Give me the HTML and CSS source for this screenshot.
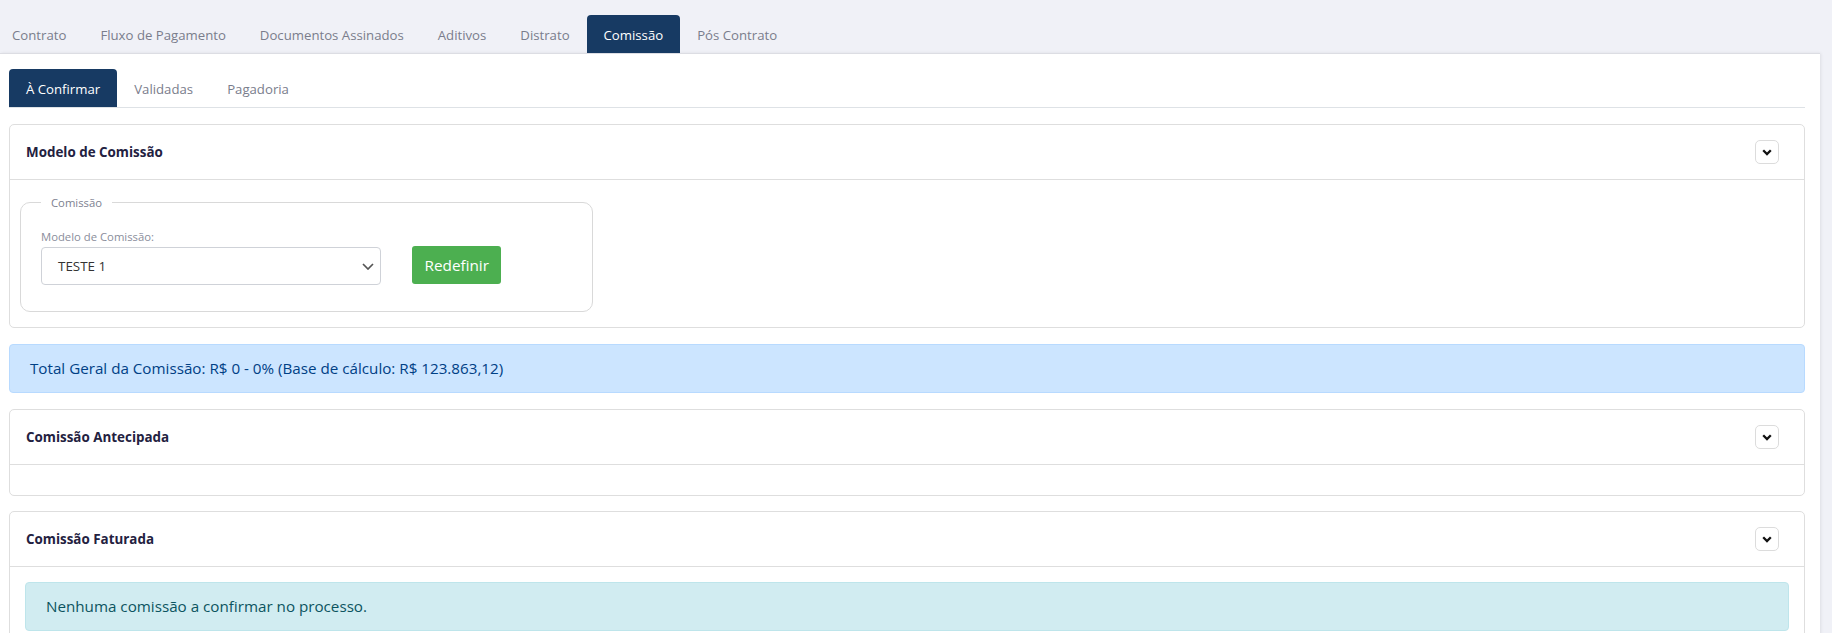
FILE: index.html
```html
<!DOCTYPE html>
<html lang="pt-BR">
<head>
    <meta charset="UTF-8">
    <meta name="viewport" content="width=device-width, initial-scale=1.0">
    <title>Comissão</title>
    <link rel="stylesheet" href="styles.css">
</head>
<body>
    <ul class="main-tabs">
        <li>Contrato</li>
        <li>Fluxo de Pagamento</li>
        <li>Documentos Assinados</li>
        <li>Aditivos</li>
        <li>Distrato</li>
        <li class="active">Comissão</li>
        <li>Pós Contrato</li>
    </ul>

    <div class="panel">
        <ul class="sub-tabs">
            <li class="active">À Confirmar</li>
            <li>Validadas</li>
            <li>Pagadoria</li>
        </ul>

        <div class="card">
            <div class="card-header">
                <span class="card-title">Modelo de Comissão</span>
                <button class="collapse-btn">
                    <svg width="10" height="7" viewBox="0 0 10 7"><path d="M1.2 1.3 L5 5.1 L8.8 1.3" /></svg>
                </button>
            </div>
            <div class="card-body model-body">
                <fieldset class="box">
                    <legend>Comissão</legend>
                    <label for="modelo">Modelo de Comissão:</label>
                    <div class="row">
                        <div class="select">
                            <span id="modelo">TESTE 1</span>
                            <svg width="12" height="7" viewBox="0 0 12 7"><path d="M1 1 L6 6 L11 1" /></svg>
                        </div>
                        <button class="btn-green">Redefinir</button>
                    </div>
                </fieldset>
            </div>
        </div>

        <div class="alert alert-primary">Total Geral da Comissão: R$ 0 - 0% (Base de cálculo: R$ 123.863,12)</div>

        <div class="card">
            <div class="card-header">
                <span class="card-title">Comissão Antecipada</span>
                <button class="collapse-btn">
                    <svg width="10" height="7" viewBox="0 0 10 7"><path d="M1.2 1.3 L5 5.1 L8.8 1.3" /></svg>
                </button>
            </div>
            <div class="card-body"></div>
        </div>

        <div class="card">
            <div class="card-header">
                <span class="card-title">Comissão Faturada</span>
                <button class="collapse-btn">
                    <svg width="10" height="7" viewBox="0 0 10 7"><path d="M1.2 1.3 L5 5.1 L8.8 1.3" /></svg>
                </button>
            </div>
            <div class="card-body">
                <div class="alert alert-info">Nenhuma comissão a confirmar no processo.</div>
            </div>
        </div>
    </div>
</body>
</html>
```

FILE: styles.css
```css
body {
    margin: 0;
    font-family: 'Open Sans', 'Noto Sans', sans-serif;
    background-color: #f0f1f7;
    color: #333;
    overflow: hidden;
}
ul {
    list-style: none;
    margin: 0;
    padding: 0;
}

/* abas principais */
.main-tabs {
    display: flex;
    padding-top: 15px;
    padding-left: 0;
    margin-left: -5px;
}
.main-tabs li {
    padding: 3px 17px 0;
    height: 35px;
    line-height: 35px;
    font-size: 13.2px;
    color: #7a7d8c;
    border-radius: 4px 4px 0 0;
}
.main-tabs li.active {
    background-color: #173a63;
    color: #fff;
}

.panel {
    background-color: #fff;
    border-top: 1px solid #dcdde3;
    margin-right: 12px;
    padding: 15px 15px 20px 9px;
    box-shadow: 1px 0 3px rgba(0, 0, 0, 0.08);
}

/* abas internas */
.sub-tabs {
    display: flex;
    border-bottom: 1px solid #dee2e6;
}
.sub-tabs li {
    padding: 3px 17px 0;
    height: 35px;
    line-height: 35px;
    font-size: 13.2px;
    color: #7a7d8c;
    border-radius: 4px 4px 0 0;
}
.sub-tabs li.active {
    background-color: #173a63;
    color: #fff;
}

.card {
    margin-top: 16px;
    border: 1px solid #dedede;
    border-radius: 5px;
}
.card + .card {
    margin-top: 15px;
}
.card-header {
    display: flex;
    align-items: center;
    justify-content: space-between;
    height: 54px;
    padding: 0 25px 0 16px;
    border-bottom: 1px solid #dedede;
}
.card-title {
    font-size: 13.4px;
    font-weight: bold;
    color: #23213f;
}
.collapse-btn {
    width: 24px;
    height: 24px;
    padding: 0;
    border: 1px solid #dcdcdc;
    border-radius: 5px;
    background: #fff;
    display: flex;
    align-items: center;
    justify-content: center;
}
.collapse-btn path {
    fill: none;
    stroke: #111;
    stroke-width: 2.3;
}
.card-body {
    padding: 15px;
}
.model-body {
    padding: 15px 10px;
}

.box {
    width: 531px;
    margin: 0;
    padding: 19px 20px 26px;
    border: 1px solid #d9d9d9;
    border-radius: 10px;
}
.box legend {
    padding: 0 10px;
    font-size: 11.3px;
    color: #7d8190;
}
.box label {
    display: block;
    font-size: 11.3px;
    color: #8a8d9b;
    margin-bottom: 3px;
}
.row {
    display: flex;
    align-items: flex-start;
    gap: 31px;
}
.select {
    width: 340px;
    height: 38px;
    box-sizing: border-box;
    border: 1px solid #cfd2d8;
    border-radius: 4px;
    display: flex;
    align-items: center;
    justify-content: space-between;
    padding: 0 6px 0 16px;
    font-size: 13.4px;
    color: #333;
}
.select path {
    fill: none;
    stroke: #555;
    stroke-width: 1.7;
}
.btn-green {
    margin-top: -1px;
    height: 38px;
    padding: 0 12.5px;
    border: none;
    border-radius: 3px;
    background-color: #4caf50;
    color: #fff;
    font-family: inherit;
    font-size: 15.3px;
}

.alert {
    margin-top: 16px;
    padding: 12px 20px;
    border: 1px solid transparent;
    border-radius: 4px;
    font-size: 15.2px;
    line-height: 23px;
}
.alert-primary {
    background-color: #cce5ff;
    border-color: #b8daff;
    color: #004085;
}
.alert-info {
    margin-top: 0;
    background-color: #d1ecf1;
    border-color: #bee5eb;
    color: #0c5460;
}
```
